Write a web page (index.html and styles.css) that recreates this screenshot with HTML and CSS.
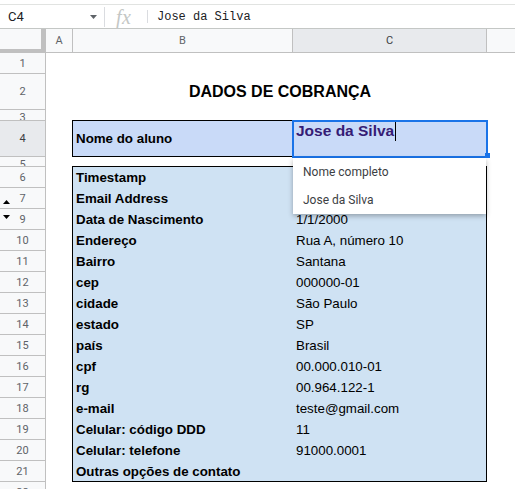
FILE: index.html
```html
<!DOCTYPE html>
<html lang="pt">
<head>
<meta charset="utf-8">
<title>Planilha</title>
<link rel="stylesheet" href="styles.css">
</head>
<body>
<div class="topgap"></div>
<div class="fbar">
  <div class="namebox">
    <span class="ref">C4</span>
    <svg class="nb-caret" width="7" height="4" viewBox="0 0 7 4"><path d="M0 0H7L3.5 4Z" fill="#5f6368"/></svg>
  </div>
  <div class="sep sep-tall"></div>
  <div class="fx">fx</div>
  <div class="sep sep-short"></div>
  <div class="ftext">Jose da Silva</div>
</div>
<div class="colhead">
  <div class="corner"></div>
  <div class="ch cha">A</div>
  <div class="ch chb">B</div>
  <div class="ch chc">C</div>
  <div class="ch chd"></div>
</div>
<div class="sheet">
  <div class="rowheads">
    <div class="rh h21"><span class="n">1</span></div>
    <div class="rh h36"><span class="n">2</span></div>
    <div class="rh h11 clip"><span class="n">3</span></div>
    <div class="rh h36 selrow"><span class="n">4</span></div>
    <div class="rh h10 clip"><span class="n">5</span></div>
    <div class="rh h21"><span class="n">6</span></div>
    <div class="rh h21"><svg class="arrow arrow-up" width="7" height="4" viewBox="0 0 7 4"><path d="M0 4H7L3.5 0Z" fill="#000"/></svg><span class="n">7</span></div>
    <div class="rh h21"><svg class="arrow arrow-down" width="7" height="4" viewBox="0 0 7 4"><path d="M0 0H7L3.5 4Z" fill="#000"/></svg><span class="n">9</span></div>
    <div class="rh h21"><span class="n">10</span></div>
    <div class="rh h21"><span class="n">11</span></div>
    <div class="rh h21"><span class="n">12</span></div>
    <div class="rh h21"><span class="n">13</span></div>
    <div class="rh h21"><span class="n">14</span></div>
    <div class="rh h21"><span class="n">15</span></div>
    <div class="rh h21"><span class="n">16</span></div>
    <div class="rh h21"><span class="n">17</span></div>
    <div class="rh h21"><span class="n">18</span></div>
    <div class="rh h21"><span class="n">19</span></div>
    <div class="rh h21"><span class="n">20</span></div>
    <div class="rh h21"><span class="n">21</span></div>
    <div class="rh h21"><span class="n">22</span></div>
  </div>
  <div class="cells">
    <div class="title">DADOS DE COBRANÇA</div>
    <div class="box box1"><span class="lbl">Nome do aluno</span></div>
    <div class="editor">Jose da Silva<span class="tcursor"></span>
      <span class="handle"></span>
      <div class="dd">
        <div class="dd-item">Nome completo</div>
        <div class="dd-item">Jose da Silva</div>
      </div>
    </div>
    <div class="box box2">
      <span class="lbl">Timestamp</span><span class="val"></span>
      <span class="lbl">Email Address</span><span class="val"></span>
      <span class="lbl">Data de Nascimento</span><span class="val">1/1/2000</span>
      <span class="lbl">Endereço</span><span class="val">Rua A, número 10</span>
      <span class="lbl">Bairro</span><span class="val">Santana</span>
      <span class="lbl">cep</span><span class="val">000000-01</span>
      <span class="lbl">cidade</span><span class="val">São Paulo</span>
      <span class="lbl">estado</span><span class="val">SP</span>
      <span class="lbl">país</span><span class="val">Brasil</span>
      <span class="lbl">cpf</span><span class="val">00.000.010-01</span>
      <span class="lbl">rg</span><span class="val">00.964.122-1</span>
      <span class="lbl">e-mail</span><span class="val">teste@gmail.com</span>
      <span class="lbl">Celular: código DDD</span><span class="val">11</span>
      <span class="lbl">Celular: telefone</span><span class="val">91000.0001</span>
      <span class="lbl">Outras opções de contato</span><span class="val"></span>
    </div>
  </div>
</div>
</body>
</html>
```
FILE: styles.css
```css
* { box-sizing: border-box; }
html, body { margin: 0; padding: 0; }
body {
  width: 515px;
  height: 489px;
  overflow: hidden;
  background: #fff;
  font-family: "Liberation Sans", Arial, sans-serif;
  color: #000;
}

/* top formula bar */
.topgap { height: 5px; border-bottom: 1px solid #e1e3e1; }
.fbar {
  height: 24px;
  display: flex;
  align-items: center;
  border-bottom: 1px solid #c4c7c5;
}
.namebox {
  width: 104px;
  height: 100%;
  flex: none;
  display: flex;
  align-items: center;
  justify-content: space-between;
  padding: 0 7px 0 8px;
  font-family: Roboto, "Liberation Sans", sans-serif;
  font-size: 13px;
  color: #202124;
}
.nb-caret { display: block; margin-top: 1px; }
.sep { width: 1px; flex: none; background: #dadce0; }
.sep-tall { height: 20px; }
.sep-short { height: 13px; }
.fx {
  width: 20px;
  margin: 0 11px 0 11px;
  font-family: "Liberation Serif", serif;
  font-style: italic;
  font-size: 20px;
  line-height: 20px;
  color: #c4c7c5;
  letter-spacing: 0.5px;
}
.ftext {
  margin-left: 9px;
  font-family: "Liberation Mono", monospace;
  font-size: 12px;
  color: #202124;
}

/* column headers */
.colhead {
  display: flex;
  height: 24px;
  background: #f8f9fa;
}
.corner {
  width: 46px;
  flex: none;
  border-right: 5px solid #c0c0c0;
  border-bottom: 4px solid #c0c0c0;
}
.ch {
  flex: none;
  display: flex;
  align-items: center;
  justify-content: center;
  border-right: 1px solid #c0c0c0;
  border-bottom: 1px solid #c0c0c0;
  font-family: Roboto, "Liberation Sans", sans-serif;
  font-size: 11px;
  color: #5f6368;
}
.cha { width: 27px; }
.chb { width: 220px; }
.chc { width: 194px; background: #e8eaed; color: #3c4043; }
.chd { flex: 1; border-right: none; }

/* sheet body */
.sheet { display: flex; }
.rowheads {
  width: 46px;
  flex: none;
  display: flex;
  flex-direction: column;
}
.rh {
  flex: none;
  display: grid;
  grid-template-columns: 12px 1fr 12px;
  align-items: center;
  overflow: hidden;
  background: #f8f9fa;
  border-right: 1px solid #c0c0c0;
  border-bottom: 1px solid #c0c0c0;
  font-family: Roboto, "Liberation Sans", sans-serif;
  font-size: 11px;
  color: #5f6368;
}
.rh .n { grid-column: 2; grid-row: 1; text-align: center; }
.rh.clip { align-items: start; line-height: 16px; }
.rh.selrow { background: #e8eaed; color: #3c4043; }
.h21 { height: 21px; }
.h36 { height: 36px; }
.h11 { height: 11px; }
.h10 { height: 10px; }
.arrow { grid-column: 1; grid-row: 1; margin-left: 3px; }
.arrow-up { align-self: end; margin-bottom: 4px; }
.arrow-down { align-self: start; margin-top: 6px; }

.cells {
  flex: 1;
  display: grid;
  grid-template-columns: 27px 220px 194px 1fr;
  grid-template-rows: 21px 36px 11px 36px 10px repeat(16, 21px);
}
.title {
  grid-row: 2;
  grid-column: 2 / 4;
  display: flex;
  align-items: center;
  justify-content: center;
  font-weight: bold;
  font-size: 16px;
}
.box {
  border: 1px solid #000;
  margin: -1px 0 0 -1px;
}
.box1 {
  grid-row: 4;
  grid-column: 2 / 4;
  background: #c9daf8;
  display: flex;
  align-items: center;
}
.box2 {
  grid-row: 6 / 21;
  grid-column: 2 / 4;
  background: #cfe2f3;
  display: grid;
  grid-template-columns: 220px 1fr;
  grid-template-rows: repeat(14, 21px) 1fr;
  overflow: hidden;
}
.lbl, .val {
  display: flex;
  align-items: center;
  padding-left: 3px;
  font-size: 13.33px;
  white-space: nowrap;
}
.lbl { font-weight: bold; }

/* in-cell editor */
.editor {
  grid-row: 4;
  grid-column: 3;
  margin: -1px;
  position: relative;
  z-index: 2;
  border: 2px solid #1a73e8;
  background: #c9daf8;
  padding: 0 2px;
  font-weight: bold;
  font-size: 15.5px;
  line-height: 18px;
  color: #351c75;
  white-space: nowrap;
}
.tcursor {
  display: inline-block;
  width: 1px;
  height: 19px;
  margin-left: 1px;
  vertical-align: -5px;
  background: #000;
}
.handle {
  position: absolute;
  right: -4px;
  bottom: -2px;
  width: 5px;
  height: 5px;
  background: #1a73e8;
  z-index: 3;
}
.dd {
  position: absolute;
  left: -1px;
  top: 100%;
  margin-top: 2px;
  width: 193px;
  background: #fff;
  box-shadow: 0 2px 5px rgba(0, 0, 0, 0.3);
  font-family: Roboto, "Liberation Sans", sans-serif;
  font-weight: 400;
  font-size: 12px;
  color: #3c4043;
}
.dd-item {
  height: 28px;
  display: flex;
  align-items: center;
  padding-left: 10px;
}
```
